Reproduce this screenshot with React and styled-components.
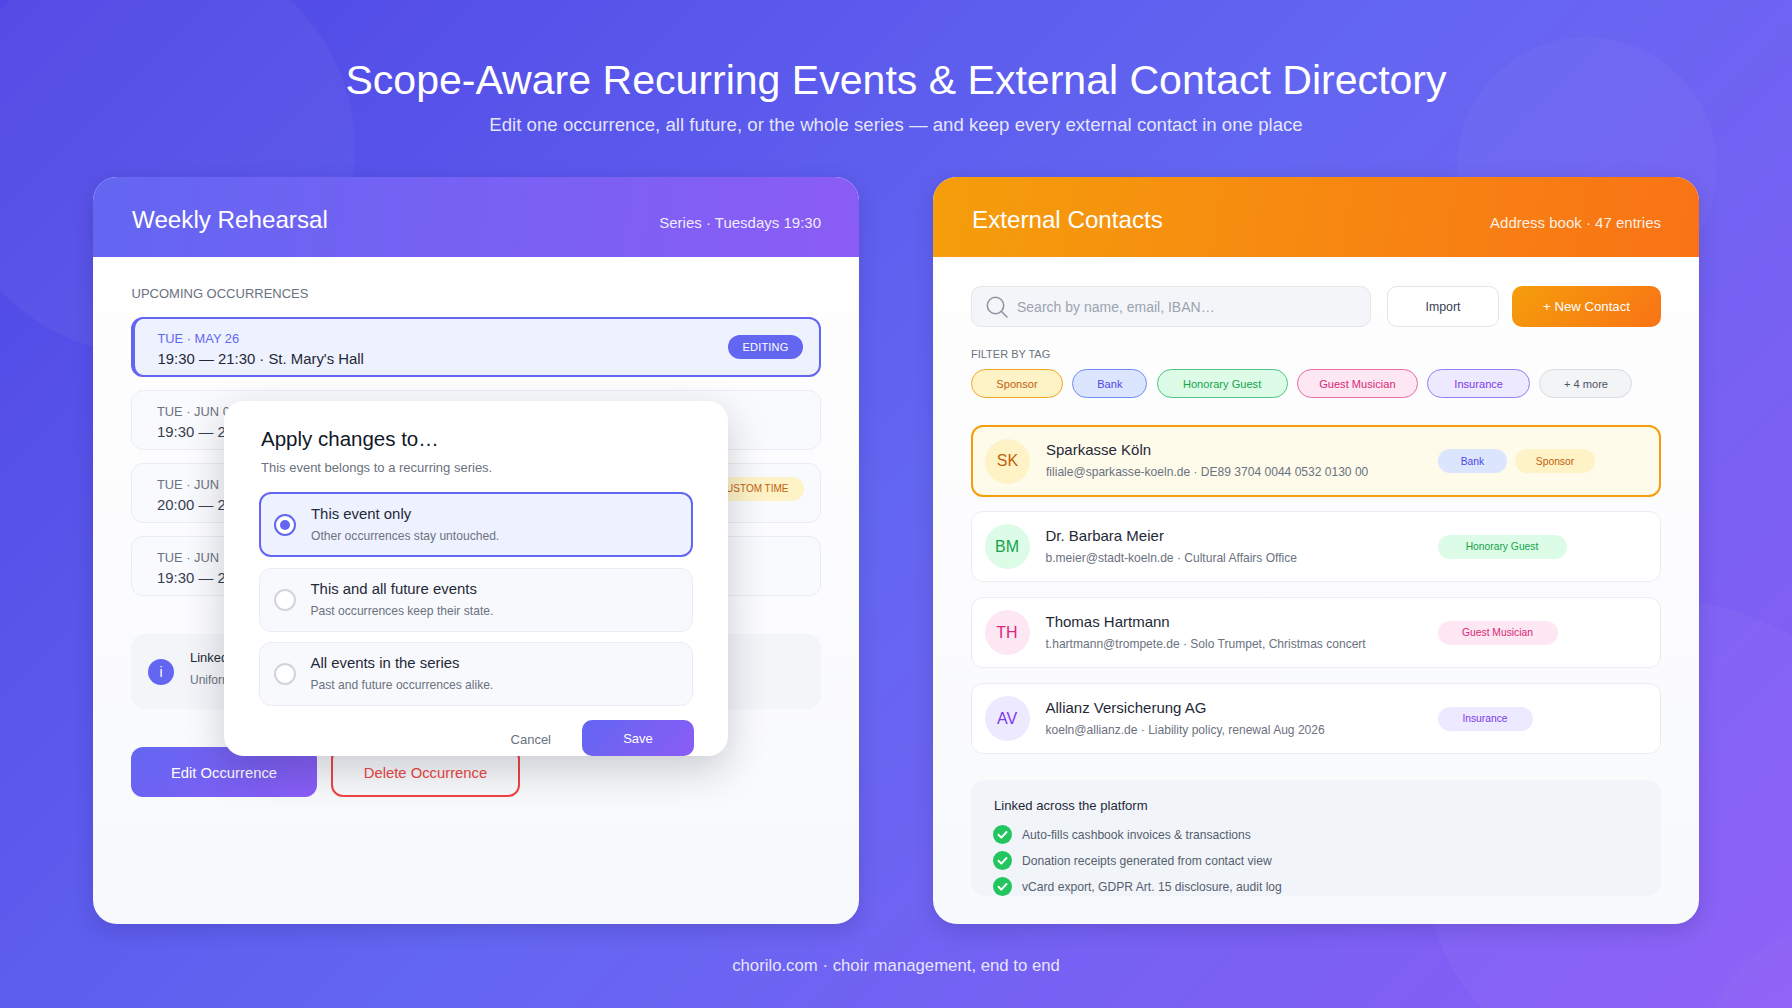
import React from 'react';
import styled, { createGlobalStyle } from 'styled-components';

const GlobalStyle = createGlobalStyle`
  * {
    box-sizing: border-box;
  }

  body {
    margin: 0;
    font-family: "Liberation Sans", Arial, sans-serif;
  }
`;

const TAGS = {
  sponsor: { bg: '#fef3c7', fg: '#c2610c', line: '#f5a623', chip: 92, row: 80 },
  bank: { bg: '#dbe6fe', fg: '#4f46e5', line: '#6f8df5', chip: 75, row: 69 },
  honorary: { bg: '#dcfce7', fg: '#16a34a', line: '#4ec483', chip: 131, row: 129 },
  guest: { bg: '#fce7f3', fg: '#db2777', line: '#ec6aa8', chip: 121, row: 120 },
  insurance: { bg: '#ede9fe', fg: '#7c3aed', line: '#9a7cf3', chip: 103, row: 95 },
  more: { bg: '#f3f4f6', fg: '#4b5563', line: '#d8dce3', chip: 93, row: 93 },
};

const Page = styled.div`
  position: relative;
  width: 1792px;
  height: 1008px;
  overflow: hidden;
  padding: 53px 93px 0;
  background: linear-gradient(135deg, #4f46e5 0%, #6366f1 50%, #8b5cf6 100%);
`;

const Blob = styled.div`
  position: absolute;
  left: ${(p) => p.$x - p.$r}px;
  top: ${(p) => p.$y - p.$r}px;
  width: ${(p) => p.$r * 2}px;
  height: ${(p) => p.$r * 2}px;
  border-radius: 50%;
  background: rgba(255, 255, 255, ${(p) => p.$alpha});
`;

const Hero = styled.header`
  position: relative;
  text-align: center;
  color: #fff;

  h1 {
    margin: 0;
    font-size: 41.05px;
    line-height: 54px;
    font-weight: 400;
  }

  p {
    margin: 6px 0 0;
    font-size: 18.65px;
    line-height: 24px;
    color: rgba(255, 255, 255, 0.85);
  }
`;

const Columns = styled.main`
  position: relative;
  display: flex;
  gap: 74px;
  margin-top: 40px;
`;

const Card = styled.section`
  position: relative;
  flex: 1;
  height: 747px;
  overflow: hidden;
  border-radius: 24px;
  background: linear-gradient(180deg, #ffffff 0%, #f8f9fc 100%);
  box-shadow: 0 6px 20px rgba(30, 20, 90, 0.18);
`;

const CardHead = styled.div`
  display: flex;
  justify-content: space-between;
  align-items: baseline;
  height: 80px;
  padding: 30px 38px 0;
  color: #fff;
  background: ${(p) => p.$bg};

  h2 {
    margin: 0 0 0 1px;
    font-size: 24.2px;
    line-height: 26px;
    font-weight: 400;
  }

  span {
    font-size: 15px;
    color: rgba(255, 255, 255, 0.9);
  }
`;

const CardBody = styled.div`
  padding: 29px 38px 0;
`;

const SectionLabel = styled.div`
  margin-left: 0.5px;
  font-size: 13px;
  line-height: 16px;
  color: #6b7280;
`;

const Occurrences = styled.div`
  display: flex;
  flex-direction: column;
  gap: 13px;
  margin-top: 15px;
`;

const Occurrence = styled.div`
  display: flex;
  align-items: center;
  justify-content: space-between;
  height: 60px;
  padding: 0 16.5px 0 ${(p) => (p.$active ? 22.5 : 25)}px;
  border: ${(p) => (p.$active ? '2px solid #6366f1' : '1.5px solid #e9ecf2')};
  border-left-width: ${(p) => (p.$active ? 4 : 1.5)}px;
  border-radius: 12px;
  background: ${(p) => (p.$active ? '#eef2ff' : '#f9fafd')};
`;

const OccurrenceText = styled.div`
  margin-top: 6px;

  div:first-child {
    font-size: 12.85px;
    line-height: 18px;
    color: ${(p) => (p.$active ? '#6366f1' : '#6b7280')};
  }

  div:last-child {
    font-size: 14.9px;
    line-height: 22px;
    color: ${(p) => (p.$active ? '#1f2937' : '#374151')};
  }
`;

const StatusPill = styled.span`
  display: inline-flex;
  align-items: center;
  height: 24px;
  margin-bottom: ${(p) => (p.$warn ? 9 : 0)}px;
  padding: 0 ${(p) => (p.$warn ? 15 : 14)}px;
  border-radius: 12px;
  font-size: ${(p) => (p.$warn ? 10 : 11)}px;
  letter-spacing: ${(p) => (p.$warn ? 0 : 0.2)}px;
  color: ${(p) => (p.$warn ? '#c2610c' : '#fff')};
  background: ${(p) => (p.$warn ? '#fef3c7' : '#6366f1')};
`;

const InfoBox = styled.div`
  display: flex;
  align-items: center;
  gap: 16px;
  height: 75px;
  margin-top: 38px;
  padding-left: 17px;
  border-radius: 14px;
  background: #f3f5f9;
`;

const InfoIcon = styled.div`
  display: flex;
  align-items: center;
  justify-content: center;
  width: 26px;
  height: 26px;
  border-radius: 50%;
  font-size: 14px;
  color: #fff;
  background: #6366f1;
`;

const InfoText = styled.div`
  margin-bottom: 5px;

  div:first-child {
    font-size: 13px;
    line-height: 23px;
    color: #1f2937;
  }

  div:last-child {
    font-size: 12px;
    line-height: 23px;
    color: #6b7280;
  }
`;

const Actions = styled.div`
  display: flex;
  gap: 14px;
  margin-top: 38px;
`;

const PrimaryButton = styled.button`
  width: 186px;
  height: 50px;
  padding: 2px 0 0;
  border: 0;
  border-radius: 12px;
  font: inherit;
  font-size: 14.8px;
  color: #fff;
  background: linear-gradient(135deg, #6366f1, #8b5cf6);
`;

const DangerButton = styled.button`
  width: 189px;
  height: 50px;
  padding: 2px 0 0;
  border: 2px solid #ef4444;
  border-radius: 12px;
  font: inherit;
  font-size: 14.8px;
  color: #ef4444;
  background: transparent;
`;

const Modal = styled.div`
  position: absolute;
  left: 131px;
  top: 224px;
  width: 504px;
  height: 355px;
  overflow: hidden;
  padding: 25px 35px 0;
  border-radius: 20px;
  background: #fff;
  box-shadow: 0 14px 40px rgba(15, 23, 42, 0.2);

  h3 {
    margin: 0 0 0 2px;
    font-size: 20.5px;
    line-height: 26px;
    font-weight: 400;
    color: #111827;
  }

  p {
    margin: 7px 0 0 2px;
    font-size: 13px;
    line-height: 18px;
    color: #6b7280;
  }
`;

const ScopeList = styled.div`
  display: flex;
  flex-direction: column;
  gap: 10.5px;
  margin-top: 15px;
`;

const ScopeOption = styled.div`
  display: flex;
  align-items: center;
  gap: 15px;
  height: ${(p) => (p.$on ? 65 : 64)}px;
  padding-left: ${(p) => (p.$on ? 13 : 13.5)}px;
  border: ${(p) => (p.$on ? '2px solid #6366f1' : '1.5px solid #e9ecf3')};
  border-radius: 12px;
  background: ${(p) => (p.$on ? '#eef2ff' : '#f8f9fd')};

  div div:first-child {
    font-size: 14.9px;
    line-height: 22px;
    color: #1f2937;
  }

  div div:last-child {
    font-size: 12.1px;
    line-height: 22px;
    color: #6b7280;
  }
`;

const Radio = styled.span`
  display: flex;
  align-items: center;
  justify-content: center;
  flex: none;
  width: 22px;
  height: 22px;
  border: 2px solid ${(p) => (p.$on ? '#6366f1' : '#d1d5db')};
  border-radius: 50%;
  background: #fff;

  &::after {
    content: '';
    display: ${(p) => (p.$on ? 'block' : 'none')};
    width: 10px;
    height: 10px;
    border-radius: 50%;
    background: #6366f1;
  }
`;

const ModalFooter = styled.div`
  display: flex;
  align-items: center;
  justify-content: flex-end;
  gap: 31px;
  margin: 14px -1px 0 0;
`;

const CancelLabel = styled.span`
  margin-top: 2px;
  font-size: 13px;
  color: #6b7280;
`;

const SaveButton = styled.button`
  width: 112px;
  height: 36px;
  border: 0;
  border-radius: 10px;
  font: inherit;
  font-size: 13px;
  color: #fff;
  background: linear-gradient(135deg, #6366f1, #8b5cf6);
`;

const Toolbar = styled.div`
  display: flex;
  height: 41px;
`;

const SearchBox = styled.div`
  display: flex;
  align-items: center;
  gap: 9px;
  flex: 1;
  margin-right: 16px;
  padding-left: 14px;
  border: 1.5px solid #e5e7eb;
  border-radius: 10px;
  font-size: 14px;
  color: #9ca3af;
  background: #f3f5f9;
`;

const ImportButton = styled.button`
  width: 112px;
  margin-right: 13px;
  border: 1.5px solid #e2e5ea;
  border-radius: 10px;
  font: inherit;
  font-size: 12.3px;
  color: #374151;
  background: #fff;
`;

const NewButton = styled.button`
  width: 149px;
  border: 0;
  border-radius: 10px;
  font: inherit;
  font-size: 13.2px;
  color: #fff;
  background: linear-gradient(135deg, #f59e0b, #f97316);
`;

const FilterLabel = styled.div`
  margin-top: 20px;
  font-size: 11px;
  line-height: 14px;
  color: #6b7280;
`;

const ChipRow = styled.div`
  display: flex;
  gap: 9.3px;
  margin-top: 8px;
`;

const Chip = styled.span`
  display: inline-flex;
  align-items: center;
  justify-content: center;
  width: ${(p) => TAGS[p.$tag].chip}px;
  height: 29px;
  border: 1.5px solid ${(p) => TAGS[p.$tag].line};
  border-radius: 15px;
  font-size: 11.1px;
  color: ${(p) => TAGS[p.$tag].fg};
  background: ${(p) => TAGS[p.$tag].bg};
`;

const ContactList = styled.div`
  display: flex;
  flex-direction: column;
  gap: 15px;
  margin-top: 27px;
`;

const ContactRow = styled.div`
  display: grid;
  grid-template-columns: 45px 376px 1fr;
  align-items: center;
  gap: 16px;
  height: ${(p) => (p.$active ? 72 : 71)}px;
  margin-bottom: ${(p) => (p.$active ? -1 : 0)}px;
  padding-left: ${(p) => (p.$active ? 12 : 12.5)}px;
  border: ${(p) => (p.$active ? '2px solid #f59e0b' : '1.5px solid #e9ecf2')};
  border-radius: 12px;
  background: ${(p) => (p.$active ? '#fffbeb' : '#fff')};
`;

const Avatar = styled.div`
  display: flex;
  align-items: center;
  justify-content: center;
  width: 45px;
  height: 45px;
  border-radius: 50%;
  font-size: 16px;
  color: ${(p) => TAGS[p.$tag].fg};
  background: ${(p) => TAGS[p.$tag].bg};
`;

const ContactInfo = styled.div`
  div:first-child {
    font-size: 15px;
    line-height: 22px;
    color: #1f2937;
  }

  div:last-child {
    font-size: 12.05px;
    line-height: 22px;
    color: #6b7280;
  }
`;

const TagRow = styled.div`
  display: flex;
  gap: 8px;
`;

const Tag = styled.span`
  display: inline-flex;
  align-items: center;
  justify-content: center;
  width: ${(p) => TAGS[p.$tag].row}px;
  height: 24px;
  border-radius: 12px;
  font-size: 10.3px;
  color: ${(p) => TAGS[p.$tag].fg};
  background: ${(p) => TAGS[p.$tag].bg};
`;

const PlatformBox = styled.div`
  height: 116px;
  margin-top: 26px;
  overflow: hidden;
  padding: 18px 22px 0;
  border-radius: 14px;
  background: #f1f4f9;
`;

const PlatformTitle = styled.div`
  margin-left: 1px;
  font-size: 13.1px;
  line-height: 16px;
  color: #1f2937;
`;

const PlatformList = styled.div`
  display: flex;
  flex-direction: column;
  gap: 7px;
  margin-top: 11px;
`;

const PlatformItem = styled.div`
  display: flex;
  align-items: center;
  gap: 10px;
  height: 19px;
  font-size: 12.12px;
  color: #55606e;
`;

const Footer = styled.footer`
  position: relative;
  margin-top: 32px;
  text-align: center;
  font-size: 16.75px;
  line-height: 20px;
  color: rgba(255, 255, 255, 0.85);
`;

const SearchGlyph = () => (
  <svg width="22" height="22" viewBox="0 0 22 22" fill="none" stroke="#8b93a1" strokeWidth="1.5" strokeLinecap="round">
    <circle cx="9.5" cy="9.5" r="8.2" />
    <path d="M15.5 15.5l5.5 5.5" />
  </svg>
);

const CheckDot = () => (
  <svg width="19" height="19" viewBox="0 0 19 19">
    <circle cx="9.5" cy="9.5" r="9.5" fill="#22c55e" />
    <path d="M5.5 9.8l2.8 2.8 5.2-5.6" fill="none" stroke="#fff" strokeWidth="2" strokeLinecap="round" strokeLinejoin="round" />
  </svg>
);

// en space in the later dates: the day number sits fully behind the dialog
const occurrences = [
  { date: 'TUE · MAY 26', time: '19:30 — 21:30 · St. Mary\'s Hall', active: true, pill: 'EDITING' },
  { date: 'TUE · JUN 02', time: '19:30 — 21:30 · St. Mary\'s Hall' },
  { date: 'TUE · JUN\u200209', time: '20:00 — 22:00 · St. Mary\'s Hall', pill: 'CUSTOM TIME', warn: true },
  { date: 'TUE · JUN\u200216', time: '19:30 — 21:30 · St. Mary\'s Hall' },
];

const scopes = [
  { title: 'This event only', text: 'Other occurrences stay untouched.', on: true },
  { title: 'This and all future events', text: 'Past occurrences keep their state.' },
  { title: 'All events in the series', text: 'Past and future occurrences alike.' },
];

const chips = [
  ['sponsor', 'Sponsor'],
  ['bank', 'Bank'],
  ['honorary', 'Honorary Guest'],
  ['guest', 'Guest Musician'],
  ['insurance', 'Insurance'],
  ['more', '+ 4 more'],
];

const contacts = [
  {
    initials: 'SK',
    name: 'Sparkasse Köln',
    detail: 'filiale@sparkasse-koeln.de · DE89 3704 0044 0532 0130 00',
    avatar: 'sponsor',
    tags: [['bank', 'Bank'], ['sponsor', 'Sponsor']],
    active: true,
  },
  {
    initials: 'BM',
    name: 'Dr. Barbara Meier',
    detail: 'b.meier@stadt-koeln.de · Cultural Affairs Office',
    avatar: 'honorary',
    tags: [['honorary', 'Honorary Guest']],
  },
  {
    initials: 'TH',
    name: 'Thomas Hartmann',
    detail: 't.hartmann@trompete.de · Solo Trumpet, Christmas concert',
    avatar: 'guest',
    tags: [['guest', 'Guest Musician']],
  },
  {
    initials: 'AV',
    name: 'Allianz Versicherung AG',
    detail: 'koeln@allianz.de · Liability policy, renewal Aug 2026',
    avatar: 'insurance',
    tags: [['insurance', 'Insurance']],
  },
];

const platform = [
  'Auto-fills cashbook invoices & transactions',
  'Donation receipts generated from contact view',
  'vCard export, GDPR Art. 15 disclosure, audit log',
];

const App = () => (
  <Page>
    <GlobalStyle />
    <Blob $x={150} $y={150} $r={205} $alpha={0.035} />
    <Blob $x={1587} $y={167} $r={130} $alpha={0.03} />
    <Blob $x={1665} $y={846} $r={245} $alpha={0.035} />
    <Blob $x={1830} $y={1050} $r={122} $alpha={0.02} />

    <Hero>
      <h1>Scope-Aware Recurring Events &amp; External Contact Directory</h1>
      <p>Edit one occurrence, all future, or the whole series — and keep every external contact in one place</p>
    </Hero>

    <Columns>
      <Card>
        <CardHead $bg="linear-gradient(100deg, #6366f1, #8b5cf6)">
          <h2>Weekly Rehearsal</h2>
          <span>Series · Tuesdays 19:30</span>
        </CardHead>
        <CardBody>
          <SectionLabel>UPCOMING OCCURRENCES</SectionLabel>
          <Occurrences>
            {occurrences.map((o) => (
              <Occurrence key={o.date} $active={o.active}>
                <OccurrenceText $active={o.active}>
                  <div>{o.date}</div>
                  <div>{o.time}</div>
                </OccurrenceText>
                {o.pill && <StatusPill $warn={o.warn}>{o.pill}</StatusPill>}
              </Occurrence>
            ))}
          </Occurrences>
          <InfoBox>
            <InfoIcon>i</InfoIcon>
            <InfoText>
              <div>Linked setlist</div>
              <div>Uniform notes</div>
            </InfoText>
          </InfoBox>
          <Actions>
            <PrimaryButton>Edit Occurrence</PrimaryButton>
            <DangerButton>Delete Occurrence</DangerButton>
          </Actions>
        </CardBody>

        <Modal>
          <h3>Apply changes to…</h3>
          <p>This event belongs to a recurring series.</p>
          <ScopeList>
            {scopes.map((s) => (
              <ScopeOption key={s.title} $on={s.on}>
                <Radio $on={s.on} />
                <div>
                  <div>{s.title}</div>
                  <div>{s.text}</div>
                </div>
              </ScopeOption>
            ))}
          </ScopeList>
          <ModalFooter>
            <CancelLabel>Cancel</CancelLabel>
            <SaveButton>Save</SaveButton>
          </ModalFooter>
        </Modal>
      </Card>

      <Card>
        <CardHead $bg="linear-gradient(100deg, #f59e0b, #f97316)">
          <h2>External Contacts</h2>
          <span>Address book · 47 entries</span>
        </CardHead>
        <CardBody>
          <Toolbar>
            <SearchBox>
              <SearchGlyph />
              Search by name, email, IBAN…
            </SearchBox>
            <ImportButton>Import</ImportButton>
            <NewButton>+ New Contact</NewButton>
          </Toolbar>
          <FilterLabel>FILTER BY TAG</FilterLabel>
          <ChipRow>
            {chips.map(([tag, label]) => (
              <Chip key={tag} $tag={tag}>{label}</Chip>
            ))}
          </ChipRow>
          <ContactList>
            {contacts.map((c) => (
              <ContactRow key={c.initials} $active={c.active}>
                <Avatar $tag={c.avatar}>{c.initials}</Avatar>
                <ContactInfo>
                  <div>{c.name}</div>
                  <div>{c.detail}</div>
                </ContactInfo>
                <TagRow>
                  {c.tags.map(([tag, label]) => (
                    <Tag key={tag} $tag={tag}>{label}</Tag>
                  ))}
                </TagRow>
              </ContactRow>
            ))}
          </ContactList>
          <PlatformBox>
            <PlatformTitle>Linked across the platform</PlatformTitle>
            <PlatformList>
              {platform.map((item) => (
                <PlatformItem key={item}>
                  <CheckDot />
                  {item}
                </PlatformItem>
              ))}
            </PlatformList>
          </PlatformBox>
        </CardBody>
      </Card>
    </Columns>

    <Footer>chorilo.com · choir management, end to end</Footer>
  </Page>
);

export default App;
